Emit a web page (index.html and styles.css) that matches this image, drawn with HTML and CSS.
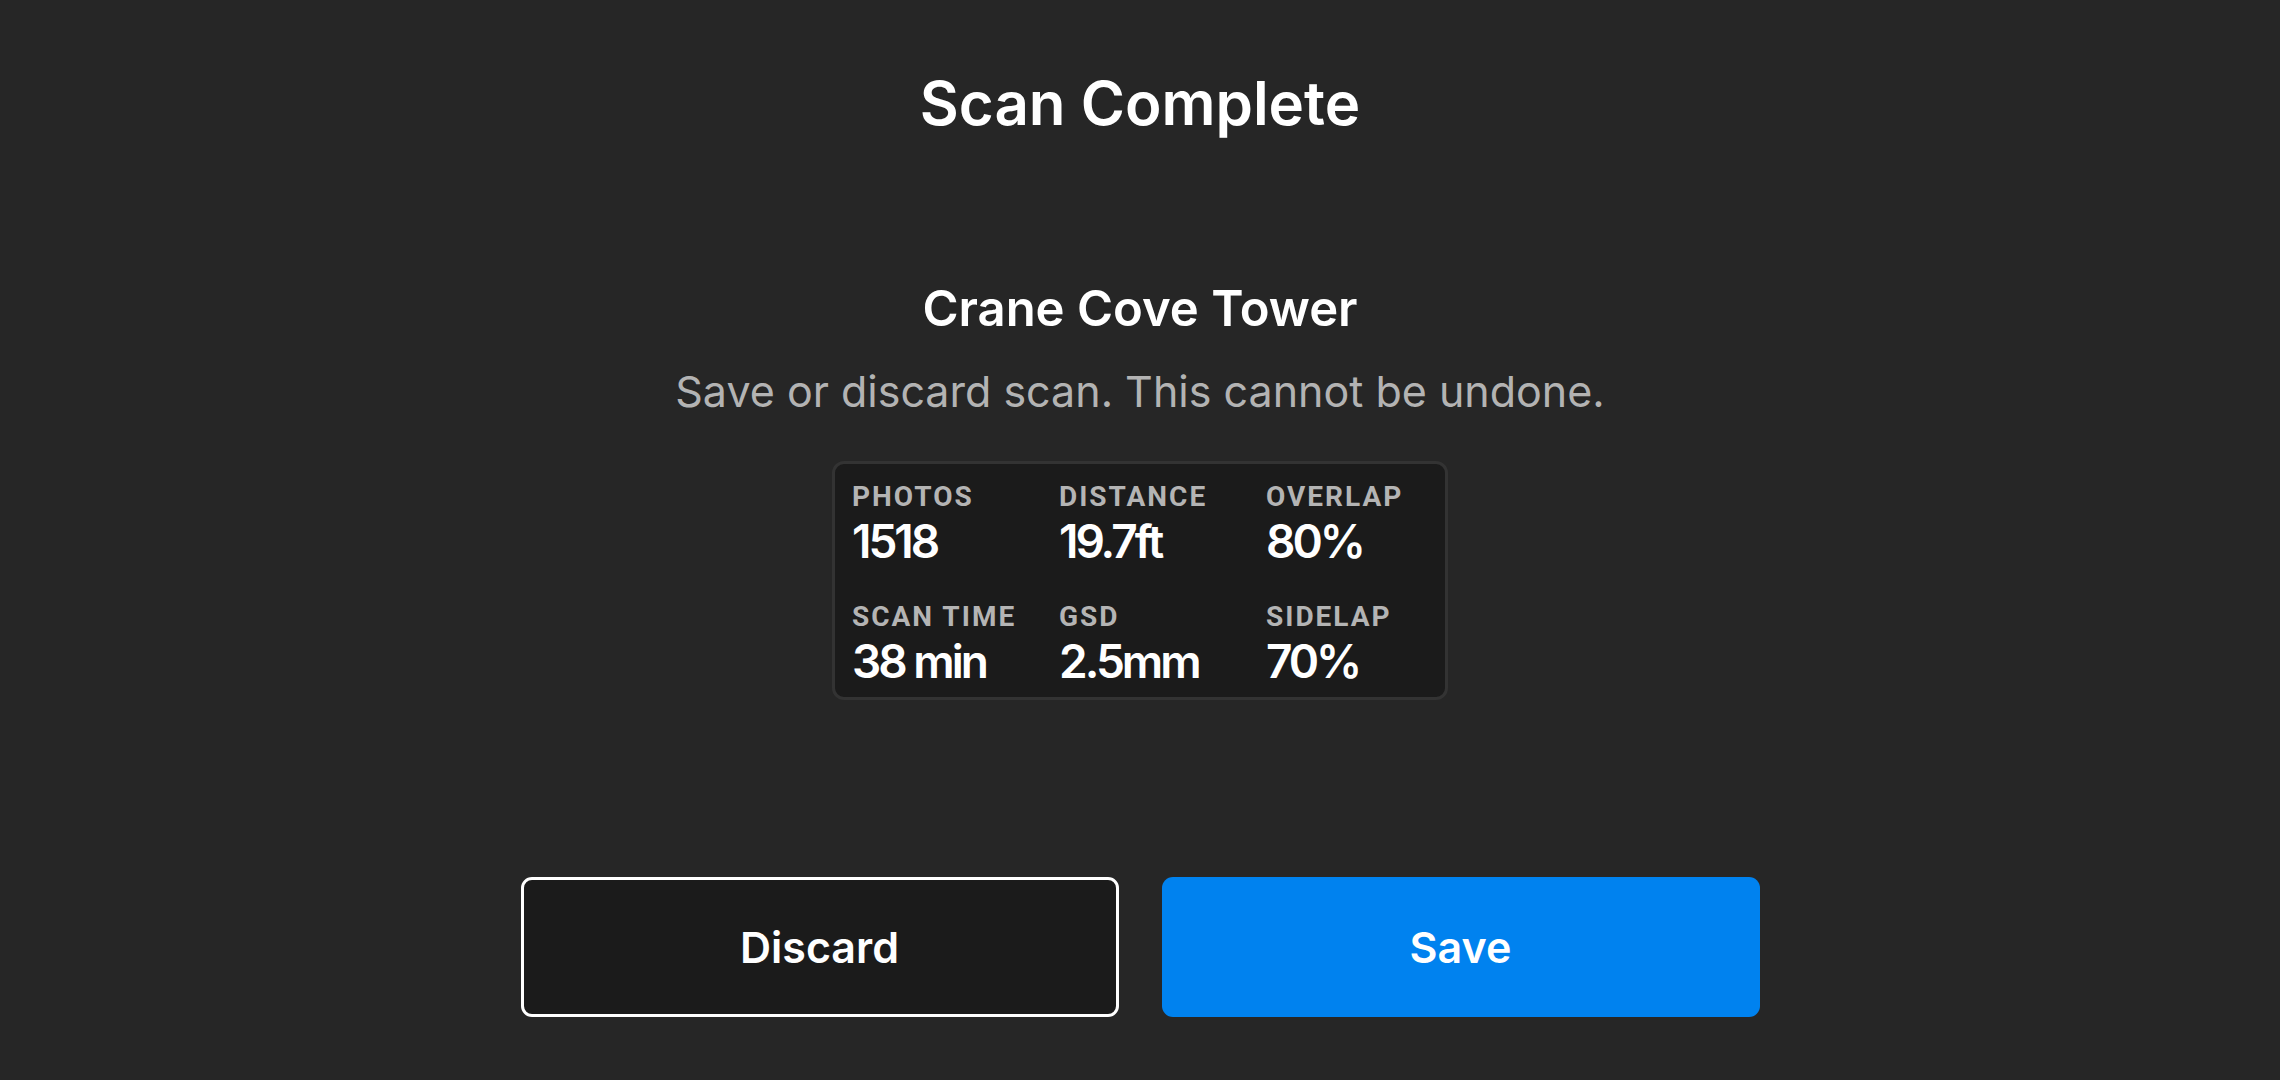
FILE: index.html
```html
<!DOCTYPE html>
<html lang="en">
<head>
<meta charset="utf-8">
<title>Scan Complete</title>
<link rel="stylesheet" href="styles.css">
</head>
<body>
<main class="screen">
  <h1 class="title">Scan Complete</h1>
  <section class="summary">
    <h2 class="name">Crane Cove Tower</h2>
    <p class="hint">Save or discard scan. This cannot be undone.</p>
    <div class="stats">
      <div class="stat"><div class="label">PHOTOS</div><div class="value">1518</div></div>
      <div class="stat"><div class="label">DISTANCE</div><div class="value">19.7ft</div></div>
      <div class="stat"><div class="label">OVERLAP</div><div class="value">80%</div></div>
      <div class="stat"><div class="label">SCAN TIME</div><div class="value">38 min</div></div>
      <div class="stat"><div class="label">GSD</div><div class="value">2.5mm</div></div>
      <div class="stat"><div class="label">SIDELAP</div><div class="value">70%</div></div>
    </div>
  </section>
  <div class="actions">
    <button class="btn btn-discard" type="button">Discard</button>
    <button class="btn btn-save" type="button">Save</button>
  </div>
</main>
</body>
</html>
```

FILE: styles.css
```css
* { box-sizing: border-box; }
html, body {
  margin: 0;
  padding: 0;
  height: 100%;
  background: #262626;
}
body {
  font-family: Inter, "Noto Sans", sans-serif;
  color: #ffffff;
}
.screen {
  height: 1080px;
  display: flex;
  flex-direction: column;
  align-items: center;
  padding-top: 67px;
}
.title {
  margin: 0;
  font-size: 60px;
  line-height: 72px;
  font-weight: 600;
  letter-spacing: 0;
}
.summary {
  display: flex;
  flex-direction: column;
  align-items: center;
  margin-top: 140px;
}
.name {
  margin: 0;
  font-size: 49px;
  line-height: 60px;
  font-weight: 600;
}
.hint {
  margin: 26px 0 0 0;
  font-size: 43px;
  line-height: 52px;
  font-weight: 400;
  color: #b3b3b3;
}
.stats {
  margin-top: 44px;
  width: 616px;
  height: 239px;
  background: #1b1b1b;
  border: 3px solid #333333;
  border-radius: 12px;
  padding: 16px 17px 0 17px;
  display: grid;
  grid-template-columns: 207px 207px auto;
  row-gap: 23px;
}
.label {
  font-family: Roboto, "DejaVu Sans Condensed", sans-serif;
  font-weight: 700;
  font-size: 28px;
  line-height: 34px;
  letter-spacing: 2px;
  color: #b4b4b4;
}
.value {
  font-size: 46px;
  line-height: 55px;
  font-weight: 600;
  letter-spacing: -3px;
  color: #ffffff;
}
.actions {
  margin-top: auto;
  margin-bottom: 63px;
  display: flex;
  gap: 43px;
}
.btn {
  width: 598px;
  height: 140px;
  border-radius: 11px;
  font-family: Inter, "Noto Sans", sans-serif;
  font-size: 43px;
  font-weight: 600;
  color: #ffffff;
  cursor: pointer;
}
.btn-discard {
  background: #1b1b1b;
  border: 3px solid #ffffff;
}
.btn-save {
  background: #0082ef;
  border: none;
}
```
